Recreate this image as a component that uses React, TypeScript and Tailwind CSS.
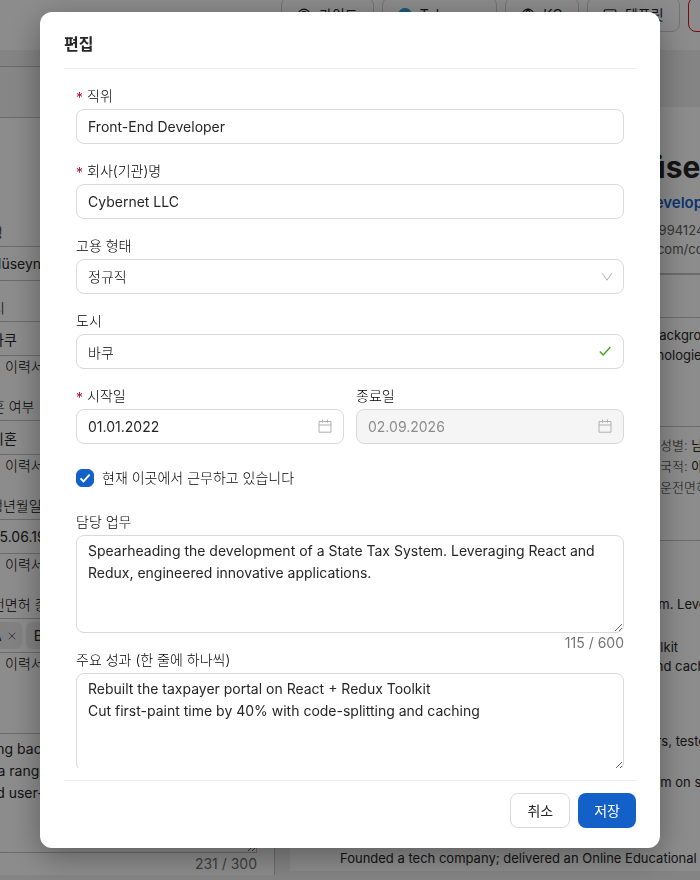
import { useState } from "react";
import { CircleUserRound, Globe, Monitor, X } from "lucide-react";

const Check = ({ className }: { className?: string }) => (
  <svg viewBox="0 0 14 14" fill="none" stroke="currentColor" className={className}>
    <path d="M1.8 7.4l3.4 3.6L12.4 3" />
  </svg>
);

const Chevron = (
  <svg
    viewBox="0 0 12 12"
    fill="none"
    stroke="currentColor"
    className="pointer-events-none absolute top-3 right-[11px] size-3 text-[#b0b0b0]"
  >
    <path d="M1.2 2.2l4.8 7 4.8-7" />
  </svg>
);

const Calendar = (
  <svg
    viewBox="0 0 14 14"
    fill="none"
    stroke="currentColor"
    className="pointer-events-none absolute top-2.5 right-3 size-3.5 text-[#b0b0b0]"
  >
    <path d="M1 2.5h12v10.7H1zM1 6h12M4.5 .5v3.2M9.5 .5v3.2" />
  </svg>
);

const inputClass =
  "block h-[35px] w-full rounded-lg border border-[#d9d9d9] bg-white px-[11px] outline-none disabled:bg-[#f5f5f5] disabled:text-[#8c8c8c]";

const textareaClass =
  "block h-[98px] w-full resize-y rounded-lg border border-[#d9d9d9] bg-white px-[11px] py-1 leading-[22px] outline-none";

type FieldProps = {
  id: string;
  label: string;
  required?: boolean;
  children: React.ReactNode;
};

function Field({ id, label, required, children }: FieldProps) {
  return (
    <div className="min-w-0 flex-1">
      <label htmlFor={id} className="mb-0.5 flex h-[22px] w-fit gap-1 font-light text-black">
        {required && <span className="pt-0.5 font-normal text-[#b01030]">*</span>}
        {label}
      </label>
      <div className="relative">{children}</div>
    </div>
  );
}

const headerButton =
  "flex h-[35px] shrink-0 items-center gap-2 rounded-lg border border-[#d0d0d0] bg-white px-[15px]";

function Header() {
  return (
    <header className="flex h-[50px] items-end gap-2 overflow-hidden bg-white pb-[18px] pl-[281px]">
      <button type="button" className={headerButton}>
        <CircleUserRound className="size-3.5" />
        가이드
      </button>
      <button type="button" className={headerButton}>
        <span className="size-3.5 rounded-full bg-[#2aa5e0]" />
        Telegram
      </button>
      <button type="button" className={headerButton}>
        <Globe className="size-3.5" />
        KO
      </button>
      <button type="button" className={headerButton}>
        <Monitor className="size-3.5" />
        템플릿
      </button>
      <button
        type="button"
        className="h-[35px] shrink-0 rounded-lg border border-[#e01020] bg-white px-4 text-[#e01020]"
      >
        삭제
      </button>
    </header>
  );
}

const profileFields = [
  { id: "surname", label: "성", required: true, value: "Hüseynov", optional: false },
  { id: "home", label: "도시", required: false, value: "바쿠", optional: true },
  { id: "marital", label: "결혼 여부", required: false, value: "미혼", optional: true },
  { id: "birth", label: "생년월일", required: true, value: "25.06.1996", optional: true },
];

const bio =
  "Long background in web apps,\nof a range of products, scalable\nand user-friendly interfaces.";

function ShowInResume() {
  return (
    <label className="flex items-center gap-2 font-light text-black">
      <input type="checkbox" defaultChecked className="size-[18px]" />
      이력서에 표시
    </label>
  );
}

function ProfilePanel() {
  return (
    <section className="mt-4 w-[275px] shrink-0 overflow-hidden border-t border-r border-[#c4c4c4] bg-white">
      <div className="h-[51px] border-b border-[#c4c4c4] bg-[#f5f5f5]" />
      <div className="-ml-[21px] pt-[104px] pr-[17px]">
        {profileFields.map((field) => (
          <div key={field.id} className={field.optional ? "mb-[18px]" : "mb-4"}>
            <label htmlFor={field.id} className="mb-0.5 flex gap-1 font-light text-black">
              {field.required && <span className="text-[#b01030]">*</span>}
              {field.label}
            </label>
            <input
              id={field.id}
              defaultValue={field.value}
              className="block h-[35px] w-full rounded-lg border border-[#c4c4c4] px-[11px] outline-none"
            />
            {field.optional && <ShowInResume />}
          </div>
        ))}
        <p className="mb-0.5 font-light text-black">운전면허 종류</p>
        <div className="flex h-[35px] items-center gap-1 rounded-lg border border-[#c4c4c4] px-1">
          {["A", "B"].map((licence) => (
            <span
              key={licence}
              className="flex h-[27px] items-center gap-1 rounded-md bg-[#ececec] pr-1 pl-2"
            >
              {licence}
              <X className="size-3 text-[#707070]" />
            </span>
          ))}
        </div>
        <ShowInResume />
        <textarea
          aria-label="소개"
          className="mt-[58px] block h-[120px] w-full border border-[#c4c4c4] py-1 leading-[22px]"
          defaultValue={bio}
        />
        <p className="text-right text-[#707070]">231 / 300</p>
      </div>
    </section>
  );
}

function Resume() {
  return (
    <section className="min-w-0 flex-1 overflow-hidden pt-[57px] pl-[15px]">
      <div className="h-[764px] bg-white text-[13px] leading-[19px] whitespace-nowrap">
        <div className="flex h-[168px] flex-col items-start border-b-2 border-[#c4c4c4] pt-10 pl-[244px]">
          <h1 className="text-[30px] leading-10 font-bold">Aydın Hüseynov</h1>
          <p className="mt-1 pl-[34px] text-[15px] leading-6 font-semibold text-[#1360c8]">
            Front-End Developer
          </p>
          <p className="mt-1.5 pl-[116px] text-[#606060]">+994124567890</p>
          <p className="pl-[72px] text-[#606060]">linkedin.com/company</p>
        </div>
        <div className="h-[43px] border-b border-[#c4c4c4]" />
        <div className="h-[109px] border-b border-[#c4c4c4] pt-[7px] pl-[262px] leading-5">
          <p className="pl-4">with a strong background in web</p>
          <p>and modern technologies and tools</p>
        </div>
        <div className="h-[114px] border-b border-[#c4c4c4] pt-2 pl-[370px] leading-[21px] font-light">
          <p>
            성별: <span className="font-normal">남성</span>
          </p>
          <p>
            국적: <span className="font-normal">아제르바이잔</span>
          </p>
          <p>운전면허: A, B</p>
        </div>
        <div className="pt-[54px] pl-[50px]">
          <p>Spearheading the development of a State Tax System. Leveraging</p>
          <p>React and Redux, engineered innovative apps.</p>
          <ul className="mt-[5px] pl-5">
            <li>Rebuilt the taxpayer portal on React + Redux Toolkit</li>
            <li>Cut first-paint time by 40% with code-splitting and caching</li>
          </ul>
          <p className="mt-14">Led a cross-functional team of developers, designers, testers</p>
          <p className="mt-[22px] pl-2">
            Delivered the features of the online learning platform on schedule
          </p>
          <p className="mt-[57px]">Founded a tech company; delivered an Online Educational</p>
        </div>
      </div>
    </section>
  );
}

function EditDialog() {
  const [current, setCurrent] = useState(true);
  const [duties, setDuties] = useState(
    "Spearheading the development of a State Tax System. Leveraging React and Redux, engineered innovative applications."
  );

  return (
    <div
      role="dialog"
      aria-modal="true"
      aria-labelledby="dialog-title"
      className="flex max-h-[95vh] w-full max-w-[620px] flex-col rounded-xl bg-white px-6 py-5 shadow-[0_8px_32px_rgba(0,0,0,0.35)]"
    >
      <h2
        id="dialog-title"
        className="border-b border-[#ececec] pb-3 text-base font-semibold"
      >
        편집
      </h2>
      <form className="mb-3 flex min-h-0 flex-1 flex-col gap-4 overflow-y-auto px-3 pt-4 [scrollbar-width:none]">
        <div className="flex">
          <Field id="position" label="직위" required>
            <input id="position" className={inputClass} defaultValue="Front-End Developer" />
          </Field>
        </div>
        <div className="flex">
          <Field id="company" label="회사(기관)명" required>
            <input id="company" className={inputClass} defaultValue="Cybernet LLC" />
          </Field>
        </div>
        <div className="flex">
          <Field id="type" label="고용 형태">
            <select id="type" className={`${inputClass} appearance-none font-light text-black`}>
              <option>정규직</option>
            </select>
            {Chevron}
          </Field>
        </div>
        <div className="flex">
          <Field id="city" label="도시">
            <input id="city" className={`${inputClass} font-light text-black`} defaultValue="바쿠" />
            <Check className="absolute top-2.5 right-3 size-3.5 stroke-[1.4] text-[#3fa820]" />
          </Field>
        </div>
        <div className="flex gap-3">
          <Field id="start" label="시작일" required>
            <input id="start" className={inputClass} defaultValue="01.01.2022" />
            {Calendar}
          </Field>
          <Field id="end" label="종료일">
            <input id="end" className={inputClass} defaultValue="02.09.2026" disabled={current} />
            {Calendar}
          </Field>
        </div>
        <label className="flex h-[35px] shrink-0 items-center gap-2 font-light text-black">
          <span className="relative">
            <input
              type="checkbox"
              className="peer block size-[18px] appearance-none rounded-md border border-[#d9d9d9] checked:border-[#1360c8] checked:bg-[#1360c8]"
              checked={current}
              onChange={(e) => setCurrent(e.target.checked)}
            />
            <Check className="pointer-events-none absolute inset-[3px] hidden size-3 stroke-[2.2] text-white peer-checked:block" />
          </span>
          현재 이곳에서 근무하고 있습니다
        </label>
        <div className="flex">
          <Field id="duties" label="담당 업무">
            <textarea
              id="duties"
              className={textareaClass}
              value={duties}
              onChange={(e) => setDuties(e.target.value)}
            />
            <span className="absolute top-full right-0 leading-5 text-[#757575]">
              {`${duties.length} / 600`}
            </span>
          </Field>
        </div>
        <div className="flex">
          <Field id="results" label="주요 성과 (한 줄에 하나씩)">
            <textarea
              id="results"
              className={textareaClass}
              defaultValue={
                "Rebuilt the taxpayer portal on React + Redux Toolkit\nCut first-paint time by 40% with code-splitting and caching"
              }
            />
          </Field>
        </div>
      </form>
      <div className="flex justify-end gap-2 border-t border-[#ececec] pt-3">
        <button type="button" className="h-[35px] rounded-lg border border-[#d9d9d9] px-4">
          취소
        </button>
        <button type="button" className="h-[35px] rounded-lg bg-[#1360c8] px-4 text-white">
          저장
        </button>
      </div>
    </div>
  );
}

export default function App() {
  return (
    <div className="h-screen overflow-hidden bg-[#f0f0f0] font-['Inter','Noto_Sans_CJK_KR',sans-serif] text-sm leading-[22px] text-[#262626]">
      <Header />
      <main className="flex">
        <ProfilePanel />
        <Resume />
      </main>
      <div className="fixed inset-0 flex items-start justify-center bg-black/45 pt-3">
        <EditDialog />
      </div>
    </div>
  );
}
